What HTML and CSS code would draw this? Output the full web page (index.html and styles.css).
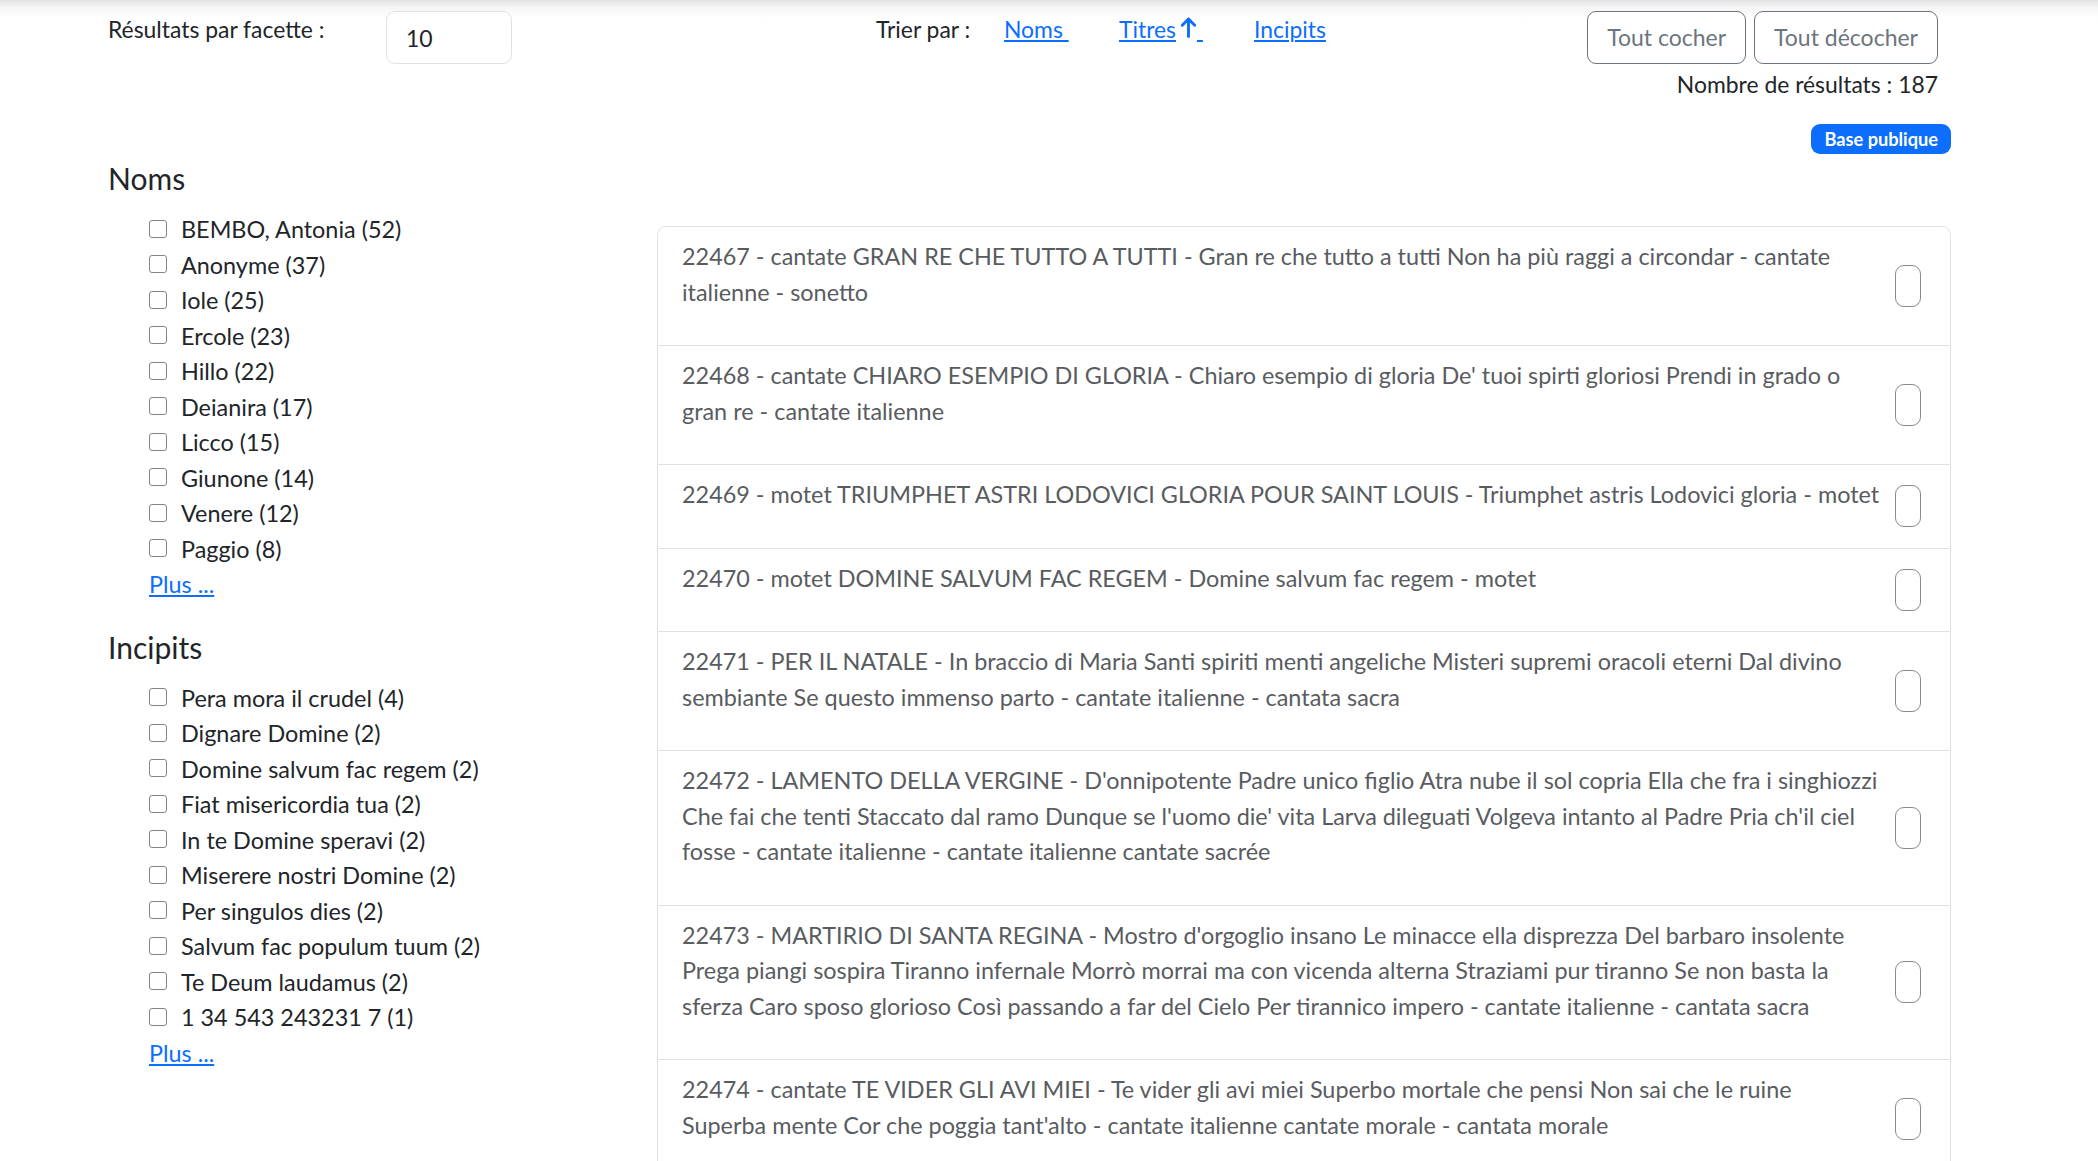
FILE: index.html
```html
<!DOCTYPE html>
<html lang="fr">
<head>
<meta charset="utf-8">
<title>Résultats</title>
<link rel="stylesheet" href="styles.css">
</head>
<body>
<header class="toolbar">
  <div class="facet-size">
    <label class="facet-size-label" for="nb">Résultats par facette :</label>
    <input id="nb" class="facet-size-input" type="text" value="10">
  </div>
  <nav class="sort">
    <span class="sort-label">Trier par :</span>
    <a class="sort-link" href="#">Noms&nbsp;</a>
    <a class="sort-link" href="#">Titres<svg class="arrow" viewBox="0 0 17 22" aria-hidden="true"><path d="M8.5 20.5V3M2.3 9.2L8.5 3l6.2 6.2"/></svg>&nbsp;</a>
    <a class="sort-link" href="#">Incipits</a>
  </nav>
  <div class="actions">
    <div class="btn-row">
      <button class="btn" type="button">Tout cocher</button>
      <button class="btn" type="button">Tout décocher</button>
    </div>
    <div class="count">Nombre de résultats : 187</div>
  </div>
</header>

<main class="layout">
  <aside class="facets">
    <section class="facet">
      <h5 class="facet-title">Noms</h5>
      <ul class="facet-list">
        <li><input type="checkbox" class="fcheck"><span>BEMBO, Antonia (52)</span></li>
        <li><input type="checkbox" class="fcheck"><span>Anonyme (37)</span></li>
        <li><input type="checkbox" class="fcheck"><span>Iole (25)</span></li>
        <li><input type="checkbox" class="fcheck"><span>Ercole (23)</span></li>
        <li><input type="checkbox" class="fcheck"><span>Hillo (22)</span></li>
        <li><input type="checkbox" class="fcheck"><span>Deianira (17)</span></li>
        <li><input type="checkbox" class="fcheck"><span>Licco (15)</span></li>
        <li><input type="checkbox" class="fcheck"><span>Giunone (14)</span></li>
        <li><input type="checkbox" class="fcheck"><span>Venere (12)</span></li>
        <li><input type="checkbox" class="fcheck"><span>Paggio (8)</span></li>
        <li><a class="more" href="#">Plus ...</a></li>
      </ul>
    </section>
    <section class="facet">
      <h5 class="facet-title">Incipits</h5>
      <ul class="facet-list">
        <li><input type="checkbox" class="fcheck"><span>Pera mora il crudel (4)</span></li>
        <li><input type="checkbox" class="fcheck"><span>Dignare Domine (2)</span></li>
        <li><input type="checkbox" class="fcheck"><span>Domine salvum fac regem (2)</span></li>
        <li><input type="checkbox" class="fcheck"><span>Fiat misericordia tua (2)</span></li>
        <li><input type="checkbox" class="fcheck"><span>In te Domine speravi (2)</span></li>
        <li><input type="checkbox" class="fcheck"><span>Miserere nostri Domine (2)</span></li>
        <li><input type="checkbox" class="fcheck"><span>Per singulos dies (2)</span></li>
        <li><input type="checkbox" class="fcheck"><span>Salvum fac populum tuum (2)</span></li>
        <li><input type="checkbox" class="fcheck"><span>Te Deum laudamus (2)</span></li>
        <li><input type="checkbox" class="fcheck"><span>1 34 543 243231 7 (1)</span></li>
        <li><a class="more" href="#">Plus ...</a></li>
      </ul>
    </section>
  </aside>

  <section class="results">
    <div class="badge-row"><span class="badge">Base publique</span></div>
    <ul class="list-group">
      <li class="item"><p class="item-text">22467 - cantate GRAN RE CHE TUTTO A TUTTI - Gran re che tutto a tutti Non ha più raggi a circondar - cantate<br>italienne - sonetto</p><input type="checkbox" class="rcheck"></li>
      <li class="item"><p class="item-text">22468 - cantate CHIARO ESEMPIO DI GLORIA - Chiaro esempio di gloria De' tuoi spirti gloriosi Prendi in grado o<br>gran re - cantate italienne</p><input type="checkbox" class="rcheck"></li>
      <li class="item"><p class="item-text">22469 - motet TRIUMPHET ASTRI LODOVICI GLORIA POUR SAINT LOUIS - Triumphet astris Lodovici gloria - motet</p><input type="checkbox" class="rcheck"></li>
      <li class="item"><p class="item-text">22470 - motet DOMINE SALVUM FAC REGEM - Domine salvum fac regem - motet</p><input type="checkbox" class="rcheck"></li>
      <li class="item"><p class="item-text">22471 - PER IL NATALE - In braccio di Maria Santi spiriti menti angeliche Misteri supremi oracoli eterni Dal divino<br>sembiante Se questo immenso parto - cantate italienne - cantata sacra</p><input type="checkbox" class="rcheck"></li>
      <li class="item"><p class="item-text">22472 - LAMENTO DELLA VERGINE - D'onnipotente Padre unico figlio Atra nube il sol copria Ella che fra i singhiozzi<br>Che fai che tenti Staccato dal ramo Dunque se l'uomo die' vita Larva dileguati Volgeva intanto al Padre Pria ch'il ciel<br>fosse - cantate italienne - cantate italienne cantate sacrée</p><input type="checkbox" class="rcheck"></li>
      <li class="item"><p class="item-text">22473 - MARTIRIO DI SANTA REGINA - Mostro d'orgoglio insano Le minacce ella disprezza Del barbaro insolente<br>Prega piangi sospira Tiranno infernale Morrò morrai ma con vicenda alterna Straziami pur tiranno Se non basta la<br>sferza Caro sposo glorioso Così passando a far del Cielo Per tirannico impero - cantate italienne - cantata sacra</p><input type="checkbox" class="rcheck"></li>
      <li class="item"><p class="item-text">22474 - cantate TE VIDER GLI AVI MIEI - Te vider gli avi miei Superbo mortale che pensi Non sai che le ruine<br>Superba mente Cor che poggia tant'alto - cantate italienne cantate morale - cantata morale</p><input type="checkbox" class="rcheck"></li>
    </ul>
  </section>
</main>
</body>
</html>
```
FILE: styles.css
```css
* { box-sizing: border-box; }

html, body { margin: 0; padding: 0; }

body {
  font-family: Lato, "Open Sans", sans-serif;
  color: #212529;
  background: #fff linear-gradient(to bottom, #e2e2e2 0, #f6f6f6 8px, #ffffff 18px) no-repeat;
  background-size: 100% 18px;
  min-height: 1161px;
}

a { color: #0d6efd; text-decoration: underline; }

/* ---------- toolbar ---------- */
.toolbar {
  display: flex;
  align-items: flex-start;
  padding: 11px 160px 0 108px;
  font-size: 22.9px;
  line-height: 36px;
}

.facet-size {
  flex: 0 0 768px;
  display: flex;
  align-items: flex-start;
}

.facet-size-label { width: 278px; }

.facet-size-input {
  width: 126px;
  height: 53px;
  border: 1px solid #dee2e6;
  border-radius: 9px;
  padding: 0 19px;
  font-family: inherit;
  font-size: 23px;
  color: #212529;
  background: #fff;
  outline: none;
}

.sort {
  flex: 1;
  display: grid;
  grid-template-columns: 128px 115px 135px auto;
  align-items: center;
}

.sort-link { display: inline-flex; align-items: center; justify-self: start; }

.arrow {
  width: 17px;
  height: 22px;
  margin: -4px 0 0 4px;
  fill: none;
  stroke: #0d6efd;
  stroke-width: 2.9;
  stroke-linecap: round;
  stroke-linejoin: round;
}

.actions {
  display: flex;
  flex-direction: column;
  align-items: flex-end;
}

.btn-row { display: flex; gap: 8px; }

.btn {
  height: 53px;
  padding: 0 19px;
  border: 1px solid #6c757d;
  border-radius: 9px;
  background: #fff;
  color: #6c757d;
  font-family: inherit;
  font-size: 23px;
  line-height: 33px;
}

.count { margin-top: 2px; }

/* ---------- layout ---------- */
.layout {
  display: grid;
  grid-template-columns: 549px 1fr;
  padding: 0 147px 0 108px;
  margin-top: 22px;
}

/* ---------- facets ---------- */
.facets { padding-top: 36px; }

.facet-title {
  margin: 0 0 16px;
  font-size: 30px;
  font-weight: 400;
  line-height: 36px;
}

.facet-list {
  list-style: none;
  margin: 0 0 26px;
  padding: 0 0 0 41px;
  font-size: 23.4px;
  line-height: 35.5px;
}

.facet-list li { display: flex; align-items: center; }

.fcheck {
  appearance: none;
  -webkit-appearance: none;
  width: 18px;
  height: 18px;
  margin: 0 14px 0 0;
  border: 1.5px solid #858585;
  border-radius: 3px;
  background: #fff;
  flex: none;
  position: relative;
  top: -1px;
}

.more { font-size: 23.4px; }

/* ---------- results ---------- */
.badge-row { display: flex; justify-content: flex-end; }

.badge {
  display: inline-block;
  padding: 6px 13px;
  border-radius: 9px;
  background: #0d6efd;
  color: #fff;
  font-size: 18.2px;
  font-weight: 700;
  line-height: 18px;
}

.list-group {
  list-style: none;
  margin: 72px 0 0;
  padding: 0;
  border: 1px solid #dee2e6;
  border-radius: 9px;
}

.item {
  display: flex;
  align-items: center;
  gap: 6px;
  padding: 12px 29px 12px 24px;
  border-top: 1px solid #dee2e6;
}

.item:first-child { border-top: 0; }

.item-text {
  flex: 1;
  margin: 0 0 23px;
  font-size: 23.4px;
  line-height: 35.5px;
  color: #595c5f;
}

.rcheck {
  appearance: none;
  -webkit-appearance: none;
  width: 26px;
  height: 42px;
  margin: 0;
  border: 1.5px solid #8a8a8a;
  border-radius: 9px;
  background: #fff;
  flex: none;
}
```
